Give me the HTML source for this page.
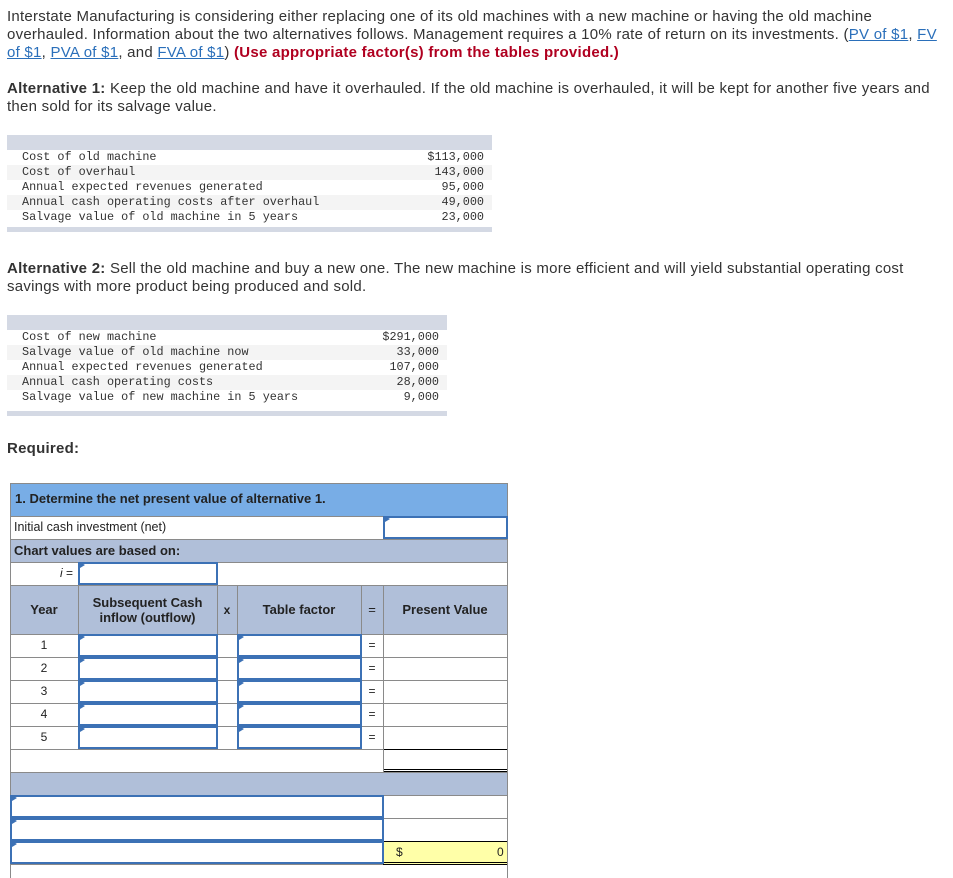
<!DOCTYPE html>
<html><head><meta charset="utf-8"><style>
*{margin:0;padding:0;box-sizing:border-box}
body{width:953px;height:878px;background:#fff;font-family:"Liberation Sans",Arial,sans-serif;color:#222;position:relative;overflow:hidden}
.p{position:absolute;left:7px;font-size:15px;line-height:18px;width:946px;color:#333;letter-spacing:0.25px;white-space:nowrap}
a{color:#2a6fba;text-decoration:underline}
.red{color:#b00020;font-weight:bold}
.dt{position:absolute;left:7px;font-family:"Liberation Mono",monospace;font-size:11.8px;color:#333}
.dt .band{height:15px;background:#d4d9e4}
.dt .r{height:15px;line-height:15px;position:relative;padding-left:15px}
.dt .r span{position:absolute;right:8px;top:0}
.dt .bb{height:5px;background:#d4d9e4;margin-top:2px}
.a{position:absolute}
.h{position:absolute;height:1px;background:#8a8a8a}
.v{position:absolute;width:1px;background:#8a8a8a}
.in{position:absolute;border:2px solid #3c71b5;background:#fff}
.in:before{content:"";position:absolute;left:0;top:0;border-left:5px solid #3c71b5;border-top:3px solid transparent;border-bottom:3px solid transparent;transform:translateY(-2px)}
.t{position:absolute;font-size:13px;color:#222}
.b{font-weight:bold}
.c{text-align:center}
</style></head><body>
<div class="p" style="top:8px">Interstate Manufacturing is considering either replacing one of its old machines with a new machine or having the old machine<br>overhauled. Information about the two alternatives follows. Management requires a 10% rate of return on its investments. (<a>PV of $1</a>, <a>FV</a><br><a>of $1</a>, <a>PVA of $1</a>, and <a>FVA of $1</a>) <span class="red">(Use appropriate factor(s) from the tables provided.)</span></div>
<div class="p" style="top:80px"><b>Alternative 1:</b> Keep the old machine and have it overhauled. If the old machine is overhauled, it will be kept for another five years and<br>then sold for its salvage value.</div>
<div class="dt" style="top:135px;width:485px">
<div class="band"></div>
<div class="r" style="background:#fff">Cost of old machine<span>$113,000</span></div>
<div class="r" style="background:#f4f4f4">Cost of overhaul<span>143,000</span></div>
<div class="r" style="background:#fff">Annual expected revenues generated<span>95,000</span></div>
<div class="r" style="background:#f4f4f4">Annual cash operating costs after overhaul<span>49,000</span></div>
<div class="r" style="background:#fff">Salvage value of old machine in 5 years<span>23,000</span></div>
<div class="bb"></div>
</div>
<div class="p" style="top:260px"><b>Alternative 2:</b> Sell the old machine and buy a new one. The new machine is more efficient and will yield substantial operating cost<br>savings with more product being produced and sold.</div>
<div class="dt" style="top:315px;width:440px">
<div class="band"></div>
<div class="r" style="background:#fff">Cost of new machine<span>$291,000</span></div>
<div class="r" style="background:#f4f4f4">Salvage value of old machine now<span>33,000</span></div>
<div class="r" style="background:#fff">Annual expected revenues generated<span>107,000</span></div>
<div class="r" style="background:#f4f4f4">Annual cash operating costs<span>28,000</span></div>
<div class="r" style="background:#fff">Salvage value of new machine in 5 years<span>9,000</span></div>
<div class="bb" style="margin-top:6px"></div>
</div>
<div class="p" style="top:440px"><b>Required:</b></div>

<div class="a" style="left:10px;top:483px;width:498px;height:33px;background:#78ade6"></div>
<div class="a" style="left:10px;top:539px;width:498px;height:23px;background:#b0bfd9"></div>
<div class="a" style="left:10px;top:585px;width:498px;height:49px;background:#b0bfd9"></div>
<div class="a" style="left:10px;top:772px;width:498px;height:23px;background:#b0bfd9"></div>
<div class="a" style="left:383px;top:841px;width:124px;height:23px;background:#ffffa8"></div>

<div class="h" style="left:10px;top:483px;width:498px"></div>
<div class="h" style="left:10px;top:516px;width:498px"></div>
<div class="h" style="left:10px;top:539px;width:498px"></div>
<div class="h" style="left:10px;top:562px;width:498px"></div>
<div class="h" style="left:10px;top:585px;width:498px"></div>
<div class="h" style="left:10px;top:634px;width:498px"></div>
<div class="h" style="left:10px;top:657px;width:498px"></div>
<div class="h" style="left:10px;top:680px;width:498px"></div>
<div class="h" style="left:10px;top:703px;width:498px"></div>
<div class="h" style="left:10px;top:726px;width:498px"></div>
<div class="h" style="left:10px;top:749px;width:373px"></div>
<div class="h" style="left:383px;top:749px;width:124px;background:#000"></div>
<div class="h" style="left:383px;top:769px;width:124px;background:#000"></div>
<div class="h" style="left:383px;top:771px;width:124px;background:#000"></div>
<div class="h" style="left:10px;top:772px;width:498px"></div>
<div class="h" style="left:10px;top:795px;width:498px"></div>
<div class="h" style="left:383px;top:818px;width:124px"></div>
<div class="h" style="left:383px;top:841px;width:124px;background:#000"></div>
<div class="h" style="left:383px;top:862px;width:124px;background:#000"></div>
<div class="h" style="left:383px;top:864px;width:124px;background:#000"></div>
<div class="h" style="left:10px;top:864px;width:373px"></div>

<div class="v" style="left:10px;top:483px;height:395px"></div>
<div class="v" style="left:507px;top:483px;height:395px"></div>
<div class="v" style="left:383px;top:516px;height:23px"></div>
<div class="v" style="left:78px;top:562px;height:187px"></div>
<div class="v" style="left:217px;top:562px;height:187px"></div>
<div class="v" style="left:237px;top:585px;height:164px"></div>
<div class="v" style="left:361px;top:585px;height:164px"></div>
<div class="v" style="left:383px;top:585px;height:187px"></div>
<div class="v" style="left:383px;top:795px;height:69px"></div>

<div class="t b" style="left:15px;top:491px">1. Determine the net present value of alternative 1.</div>
<div class="t" style="left:14px;top:520px;font-size:12.5px">Initial cash investment (net)</div>
<div class="t b" style="left:14px;top:543px">Chart values are based on:</div>
<div class="t" style="left:60px;top:566px;font-size:12px"><i>i</i> =</div>
<div class="t c b" style="left:10px;top:602px;width:68px">Year</div>
<div class="t c b" style="left:78px;top:595px;width:139px;line-height:15px">Subsequent Cash<br>inflow (outflow)</div>
<div class="t c b" style="left:217px;top:603px;width:20px;font-size:12px">x</div>
<div class="t c b" style="left:237px;top:602px;width:124px">Table factor</div>
<div class="t c" style="left:361px;top:602px;width:22px">=</div>
<div class="t c b" style="left:383px;top:602px;width:124px">Present Value</div>

<div class="t c" style="left:10px;top:638px;width:68px;font-size:12px">1</div>
<div class="t c" style="left:10px;top:661px;width:68px;font-size:12px">2</div>
<div class="t c" style="left:10px;top:684px;width:68px;font-size:12px">3</div>
<div class="t c" style="left:10px;top:707px;width:68px;font-size:12px">4</div>
<div class="t c" style="left:10px;top:730px;width:68px;font-size:12px">5</div>
<div class="t c" style="left:361px;top:638px;width:22px;font-size:12px">=</div>
<div class="t c" style="left:361px;top:661px;width:22px;font-size:12px">=</div>
<div class="t c" style="left:361px;top:684px;width:22px;font-size:12px">=</div>
<div class="t c" style="left:361px;top:707px;width:22px;font-size:12px">=</div>
<div class="t c" style="left:361px;top:730px;width:22px;font-size:12px">=</div>
<div class="t" style="left:396px;top:845px;font-size:12px">$</div>
<div class="t" style="left:497px;top:845px;font-size:12px">0</div>

<div class="in" style="left:383px;top:516px;width:125px;height:23px"></div>
<div class="in" style="left:78px;top:562px;width:140px;height:23px"></div>
<div class="in" style="left:78px;top:634px;width:140px;height:23px"></div>
<div class="in" style="left:78px;top:657px;width:140px;height:23px"></div>
<div class="in" style="left:78px;top:680px;width:140px;height:23px"></div>
<div class="in" style="left:78px;top:703px;width:140px;height:23px"></div>
<div class="in" style="left:78px;top:726px;width:140px;height:23px"></div>
<div class="in" style="left:237px;top:634px;width:125px;height:23px"></div>
<div class="in" style="left:237px;top:657px;width:125px;height:23px"></div>
<div class="in" style="left:237px;top:680px;width:125px;height:23px"></div>
<div class="in" style="left:237px;top:703px;width:125px;height:23px"></div>
<div class="in" style="left:237px;top:726px;width:125px;height:23px"></div>
<div class="in" style="left:10px;top:795px;width:374px;height:23px"></div>
<div class="in" style="left:10px;top:818px;width:374px;height:23px"></div>
<div class="in" style="left:10px;top:841px;width:374px;height:23px"></div>
</body></html>
